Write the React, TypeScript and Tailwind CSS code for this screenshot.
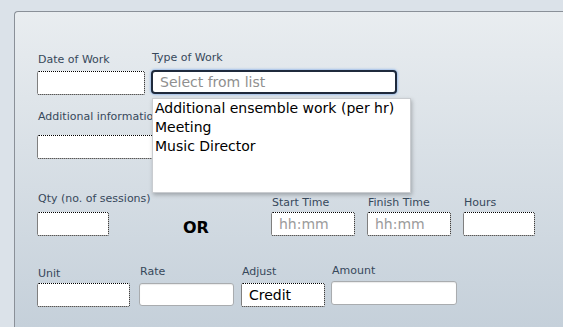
import React from 'react';

const font = "font-['DejaVu_Sans',Verdana,sans-serif]";

function Label({ text, className = '' }: { text: string; className?: string }) {
  return (
    <div className={`h-[14px] whitespace-nowrap pl-[1px] text-[11px] leading-[14px] text-[#37485b] ${className}`}>
      {text}
    </div>
  );
}

function DottedInput({ w, value, placeholder }: { w: string; value?: string; placeholder?: string }) {
  return (
    <div
      className={`${w} flex h-[24px] items-center rounded-[2px] border border-dotted border-black bg-white pl-[7px] text-[14px]`}
    >
      {value ? (
        <span className="text-black">{value}</span>
      ) : (
        <span className="text-[#9b9b9b]">{placeholder}</span>
      )}
    </div>
  );
}

function SolidInput({ w, h = 'h-[24px]' }: { w: string; h?: string }) {
  return (
    <div className={`${w} ${h} rounded-[3px] border border-[#a9acaf] bg-white shadow-[inset_0_1px_1px_rgba(0,0,0,0.08)]`} />
  );
}

export default function App() {
  const options = ['Additional ensemble work (per hr)', 'Meeting', 'Music Director'];

  return (
    <div className={`h-[327px] w-[563px] overflow-hidden bg-[#dbe2e9] pl-[14px] pt-[11px] ${font}`}>
      <div className="h-[316px] rounded-tl-[4px] border-l border-t border-[#8a9098] bg-gradient-to-b from-[#e9edf0] to-[#c5d0da] pl-[22px]">
        {/* Row 1 */}
        <div className="mt-[39px] flex items-start">
          <div className="w-[108px] pt-[2px]">
            <Label text="Date of Work" className="mb-[4px]" />
            <DottedInput w="w-[108px]" />
          </div>
          <div className="relative ml-[6px]">
            <Label text="Type of Work" className="mb-[5px]" />
            <div className="flex h-[24px] w-[246px] items-center rounded-[4px] border-2 border-[#1f2a3c] bg-white pl-[7px] text-[14px] text-[#8f8f8f] shadow-[0_0_2px_1px_rgba(110,160,230,0.55)]">
              Select from list
            </div>
            <div className="absolute left-[1px] top-[47px] z-10 h-[95px] w-[259px] border border-[#c9ccd0] bg-white pl-[2px] text-[14px] leading-[19px] text-black shadow-[1px_2px_4px_rgba(0,0,0,0.25)]">
              {options.map((o) => (
                <div key={o} className="whitespace-nowrap">
                  {o}
                </div>
              ))}
            </div>
          </div>
        </div>

        {/* Row 2 */}
        <div className="mt-[15px] w-[250px]">
          <Label text="Additional information" className="mb-[11px]" />
          <DottedInput w="w-[250px]" />
        </div>

        {/* Row 3 */}
        <div className="mt-[33px] flex items-start">
          <div className="w-[72px]">
            <Label text="Qty (no. of sessions)" className="mb-[6px]" />
            <DottedInput w="w-[72px]" />
          </div>
          <div className="w-[162px] pl-[74px] pt-[26px] text-[16px] font-bold leading-[20px] text-black">OR</div>
          <div className="w-[84px] pt-[4px]">
            <Label text="Start Time" className="mb-[2px]" />
            <DottedInput w="w-[84px]" placeholder="hh:mm" />
          </div>
          <div className="ml-[12px] w-[84px] pt-[4px]">
            <Label text="Finish Time" className="mb-[2px]" />
            <DottedInput w="w-[84px]" placeholder="hh:mm" />
          </div>
          <div className="ml-[12px] w-[72px] pt-[4px]">
            <Label text="Hours" className="mb-[2px]" />
            <DottedInput w="w-[72px]" />
          </div>
        </div>

        {/* Row 4 */}
        <div className="mt-[26px] flex items-start">
          <div className="w-[93px] pt-[3px]">
            <Label text="Unit" className="mb-[2px]" />
            <DottedInput w="w-[93px]" />
          </div>
          <div className="ml-[9px] w-[95px] pt-[1px]">
            <Label text="Rate" className="mb-[4px]" />
            <SolidInput w="w-[95px]" h="h-[23px]" />
          </div>
          <div className="ml-[7px] w-[84px] pt-[1px]">
            <Label text="Adjust" className="mb-[4px]" />
            <DottedInput w="w-[84px]" value="Credit" />
          </div>
          <div className="ml-[6px] w-[126px]">
            <Label text="Amount" className="mb-[3px]" />
            <SolidInput w="w-[126px]" />
          </div>
        </div>
      </div>
    </div>
  );
}
